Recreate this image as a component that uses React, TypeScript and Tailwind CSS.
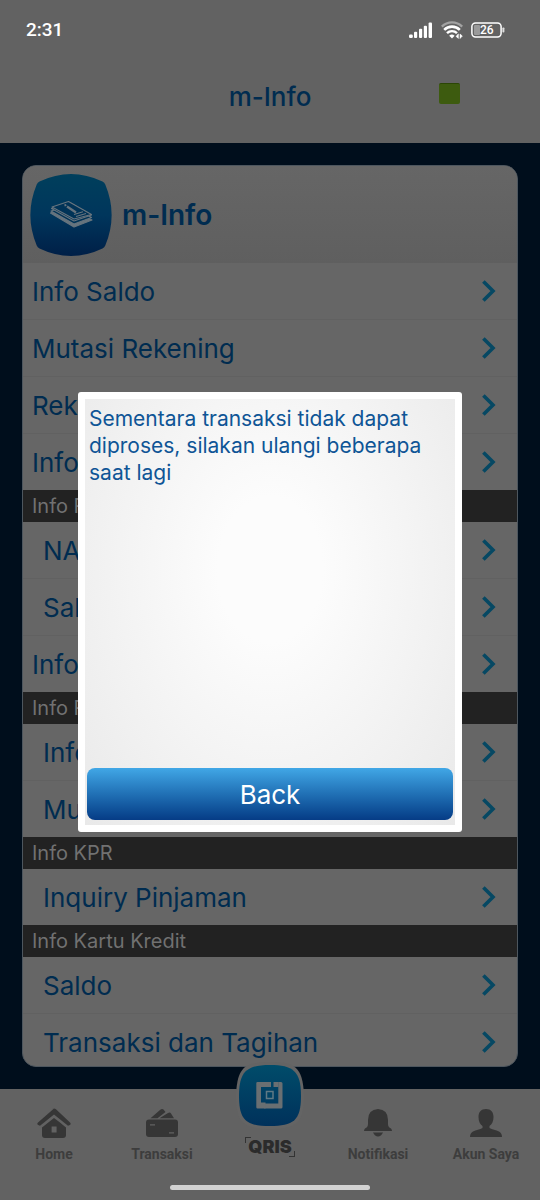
import React, { useState } from 'react';

interface MenuGroup {
  title?: string;
  items: { label: string; indent?: boolean }[];
}

const groups: MenuGroup[] = [
  {
    items: [
      { label: 'Info Saldo' },
      { label: 'Mutasi Rekening' },
      { label: 'Rekening Deposito' },
      { label: 'Info RDN' },
    ],
  },
  {
    title: 'Info Reksadana',
    items: [
      { label: 'NAB Reksadana', indent: true },
      { label: 'Saldo Reksadana', indent: true },
      { label: 'Info Reward' },
    ],
  },
  {
    title: 'Info RDN',
    items: [
      { label: 'Info Saldo', indent: true },
      { label: 'Mutasi', indent: true },
    ],
  },
  { title: 'Info KPR', items: [{ label: 'Inquiry Pinjaman', indent: true }] },
  {
    title: 'Info Kartu Kredit',
    items: [
      { label: 'Saldo', indent: true },
      { label: 'Transaksi dan Tagihan', indent: true },
    ],
  },
];

const StatusBar = () => (
  <div className="flex h-[60px] items-center justify-between pl-[26px] pr-[35px] text-white">
    <span className="font-[Roboto,sans-serif] text-[19px] font-medium">2:31</span>
    <div className="flex items-center gap-2">
      <svg width="25" height="16" viewBox="0 0 25 16" fill="currentColor">
        <rect x="1" y="12.5" width="3.8" height="3.5" rx="1.2" />
        <rect x="6" y="9.8" width="3.2" height="6.2" rx="1" />
        <rect x="11" y="6.8" width="3.2" height="9.2" rx="1" />
        <rect x="15.8" y="3.8" width="3.2" height="12.2" rx="1" />
        <rect x="20.6" y="0.6" width="3.4" height="15.4" rx="1" />
      </svg>
      <svg width="22" height="18" viewBox="0 0 22 18" fill="none">
        <path d="M0.8 5.6a14.5 14.5 0 0 1 20.4 0" stroke="#a2a2a2" strokeWidth="2.4" />
        <path d="M3.2 8.9a11 11 0 0 1 15.6 0" stroke="#fff" strokeWidth="2.6" />
        <path d="M6 12.2a7 7 0 0 1 10 0" stroke="#fff" strokeWidth="2.4" />
        <path d="M8.2 14.8a4 4 0 0 1 5.4 0L11 17.4z" fill="#fff" />
        <path d="M17.4 12.8v4.6l-2.4-2zM19 17.6V13l2.4 2z" fill="#fff" stroke="#fff" strokeWidth="0.5" />
      </svg>
      <svg width="34" height="16" viewBox="0 0 34 16">
        <rect x="3" y="3" width="6" height="10" rx="1" fill="#9a9a9a" />
        <rect x="0.9" y="0.9" width="29.2" height="14" rx="3.6" fill="none" stroke="#fff" strokeWidth="1.5" />
        <rect x="31.4" y="5.5" width="2" height="5" rx="0.8" fill="#ddd" />
        <text x="15.8" y="12.2" textAnchor="middle" fill="#fff" fontFamily="Roboto, sans-serif" fontSize="12" fontWeight="500">
          26
        </text>
      </svg>
    </div>
  </div>
);

const InfoIcon = () => (
  <svg width="82" height="82" viewBox="0 0 82 82" className="shrink-0">
    <defs>
      <linearGradient id="infoTile" x1="0" y1="0" x2="0" y2="1">
        <stop offset="0" stopColor="#003f5c" />
        <stop offset="0.5" stopColor="#00365c" />
        <stop offset="1" stopColor="#001f47" />
      </linearGradient>
    </defs>
    <path
      d="M9.500 7.500Q41-7.500 72.500 7.500Q74.500 8.500 75.300 10.500Q88 41 75.300 71.500Q74.500 73.500 72.500 74.500Q41 89.500 9.500 74.500Q7.500 73.500 6.700 71.500Q-6 41 6.700 10.500Q7.500 8.500 9.500 7.500Z"
      fill="url(#infoTile)"
    />
    <g fill="#003357" stroke="#66747e" strokeWidth="1.100" strokeLinejoin="round">
      <path d="M20.500 39l23.500 14 18-7-3-1.500-15 5-20-12z" fill="#66747e" />
      <path d="M21 37l23 13 17.500-6.500-21-12z" />
      <path d="M21.500 34.500l22.500 12.500 17.500-6-21-12z" />
      <path d="M22 33l16.500-5.500 23 13-17.500 4.500z" />
      <path d="M37 32.500l9 6" strokeWidth="2.200" />
      <path d="M34.500 31.500l1.800-.6" strokeWidth="2" />
      <path d="M44 40.500l9-2.800M46 42.500l10-3" />
    </g>
  </svg>
);

const Chevron = () => (
  <svg width="14" height="22" viewBox="0 0 14 22" fill="none" stroke="#064863" strokeWidth="3.600">
    <path d="M1.400 1.400L11 11L1.400 20.600" />
  </svg>
);

const HomeIcon = () => (
  <svg width="34" height="30" viewBox="0 0 34 30" fill="#363636">
    <path d="M17 0.500L1 14.500Q-.5 16 1.200 17L3 17.800L17 6.500L31 17.800L32.800 17Q34.500 16 33 14.500L19 1.200Q17-.4 15 1.200Z" />
    <path
      fillRule="evenodd"
      d="M17 10L5 19.500V27Q5 30 8 30H26Q29 30 29 27V19.500Q22 13.500 17 10ZM14.600 18.500h5v6h-5Z"
    />
  </svg>
);

const CardsIcon = () => (
  <svg width="34" height="30" viewBox="0 0 34 30" fill="#363636">
    <path d="M5.500 10.200L15 2Q17 .2 18.500 1.500L20.500 4L12.500 10.200Z" />
    <path d="M14.500 10.200L23 5Q25 3.800 26 5.500L29 10.200Z" />
    <path
      fillRule="evenodd"
      d="M4 11.500H30Q33 11.500 33 14.500V26Q33 29 30 29H4Q1 29 1 26V14.500Q1 11.500 4 11.500ZM5 16.200V17.400H10V16.200ZM24 24.200V25.400H29V24.200Z"
    />
  </svg>
);

const BellIcon = () => (
  <svg width="34" height="30" viewBox="0 0 34 30" fill="#363636">
    <path d="M17 1Q7 1.500 7 12V16Q7 19 4 20.500Q3 21.500 3 23H31Q31 21.500 30 20.500Q27 19 27 16V12Q27 1.500 17 1Z" />
    <path d="M12 24.500H22Q20 28.500 17 28.500Q14 28.500 12 24.500Z" />
  </svg>
);

const PersonIcon = () => (
  <svg width="34" height="30" viewBox="0 0 34 30" fill="#363636">
    <path d="M17 1C12 1 9.500 4 9.500 9C9.500 13 11 16.500 13.500 18V20C11 21.500 7 22 4 23.500Q1 25 1 29H33Q33 25 30 23.500C27 22 23 21.500 20.500 20V18C23 16.500 24.500 13 24.500 9C24.500 4 22 1 17 1Z" />
  </svg>
);

const QrisButton = () => (
  <button className="relative flex w-full flex-col items-center self-stretch" aria-label="QRIS">
    <svg width="70" height="68" viewBox="0 0 70 68" className="absolute -top-[27px]">
      <defs>
        <linearGradient id="qrisTile" x1="0" y1="0" x2="0" y2="1">
          <stop offset="0" stopColor="#004c6a" />
          <stop offset="1" stopColor="#00315b" />
        </linearGradient>
      </defs>
      <path d="M35 0C59 0 68 4 69 34C69 61 61 67 35 67C9 67 1 61 1 34C2 4 11 0 35 0Z" fill="#646464" />
      <path d="M35 3C58 3 66 9 66 34C66 59 58 64 35 64C12 64 4 59 4 34C4 9 12 3 35 3Z" fill="url(#qrisTile)" />
      <g fill="#696f72">
        <path d="M22.500 20H36V25H26V46.500H22.500Q21.300 46.500 21.300 45.300V21.200Q21.300 20 22.500 20Z" />
        <path d="M43.300 20H46Q47.500 20 47.500 21.500V45Q47.500 46.500 46 46.500H29.300V41.500H43.300Z" />
        <path d="M26 40.500H30.500V46.500H26Z" />
        <path d="M38.500 20H43.500V25H38.500Z" />
      </g>
      <rect x="31.500" y="29.500" width="6.500" height="7" fill="#004365" stroke="#5f7985" strokeWidth="1.500" />
    </svg>
    <span className="absolute top-12 flex h-5 w-[50px] items-center justify-center font-[Inter,sans-serif] text-[18px] font-black leading-5 text-[#2b2b2b]">
      QRIS
      <span className="absolute left-0 top-0 size-1.5 border-l border-t border-[#333]" />
      <span className="absolute bottom-0 right-0 size-1.5 border-b border-r border-[#333]" />
    </span>
  </button>
);

const NavButton: React.FC<{ label: string; children: React.ReactNode }> = ({ label, children }) => (
  <button className="flex flex-col items-center gap-1.5 self-start pt-[19px] font-[Roboto,sans-serif] text-[14px] font-bold leading-5 text-[#3d3d3d]">
    {children}
    {label}
  </button>
);

export default function App() {
  const [open, setOpen] = useState(true);

  return (
    <div className="relative flex h-screen flex-col overflow-hidden bg-[#000e1c] font-[Inter,sans-serif]">
      <header className="h-[143px] shrink-0 bg-[#626262]">
        <StatusBar />
        <div className="relative flex h-[72px] items-center justify-center">
          <h1 className="text-[26px] font-medium text-[#002c50]">m-Info</h1>
          <span className="absolute right-20 top-[23px] size-[21px] rounded-xs border-t border-[#2b4605] bg-[#3d5b0f]" />
        </div>
      </header>

      <main className="flex min-h-0 flex-1 flex-col px-[22px] pb-[22px] pt-[22px]">
        <section className="flex-1 overflow-hidden rounded-[14px] border border-[#4d565e] bg-[#666666]">
          <div className="flex h-[97px] items-center gap-2.5 bg-linear-to-b from-[#666666] to-[#5f5f5f] pl-[7px]">
            <InfoIcon />
            <h2 className="text-[28px] font-semibold text-[#002c50]">m-Info</h2>
          </div>
          {groups.map((group, i) => (
            <div key={i}>
              {group.title && (
                <h3 className="bg-[#222222] pl-[9px] text-[20px] leading-8 text-[#717171]">{group.title}</h3>
              )}
              <ul className="divide-y divide-[#616161]">
                {group.items.map(item => (
                  <li key={item.label}>
                    <button
                      className={`flex h-14 w-full items-center justify-between pr-[21px] text-left text-[26px] text-[#002c50] ${
                        item.indent ? 'pl-5' : 'pl-[9px]'
                      }`}
                    >
                      {item.label}
                      <Chevron />
                    </button>
                  </li>
                ))}
              </ul>
            </div>
          ))}
        </section>
      </main>

      <nav className="relative grid h-[111px] shrink-0 grid-cols-5 bg-[#626262]">
        <NavButton label="Home"><HomeIcon /></NavButton>
        <NavButton label="Transaksi"><CardsIcon /></NavButton>
        <QrisButton />
        <NavButton label="Notifikasi"><BellIcon /></NavButton>
        <NavButton label="Akun Saya"><PersonIcon /></NavButton>
        <span className="absolute bottom-2.5 left-1/2 h-[5px] w-50 -translate-x-1/2 rounded-full bg-[#d2d2d2]" />
      </nav>

      {/* Error dialog */}
      {open && (
        <div className="absolute inset-0 flex items-center justify-center pt-6">
          <div role="dialog" aria-modal="true" className="w-full max-w-[384px] rounded-[3px] bg-white p-[7px]">
            <div className="flex min-h-[426px] flex-col justify-between bg-radial-[at_50%_40%] from-[#fcfcfc] from-20% to-[#e9e9e9] p-0.5">
              <p className="px-0.5 pt-1 text-[21px] leading-[27px] text-[#0f5596]">
                Sementara transaksi tidak dapat diproses, silakan ulangi beberapa saat lagi
              </p>
              <button
                onClick={() => setOpen(false)}
                className="mb-[3px] h-[52px] rounded-lg bg-linear-to-b from-[#41a7e6] to-[#063c86] text-[26px] text-white"
              >
                Back
              </button>
            </div>
          </div>
        </div>
      )}
    </div>
  );
}
